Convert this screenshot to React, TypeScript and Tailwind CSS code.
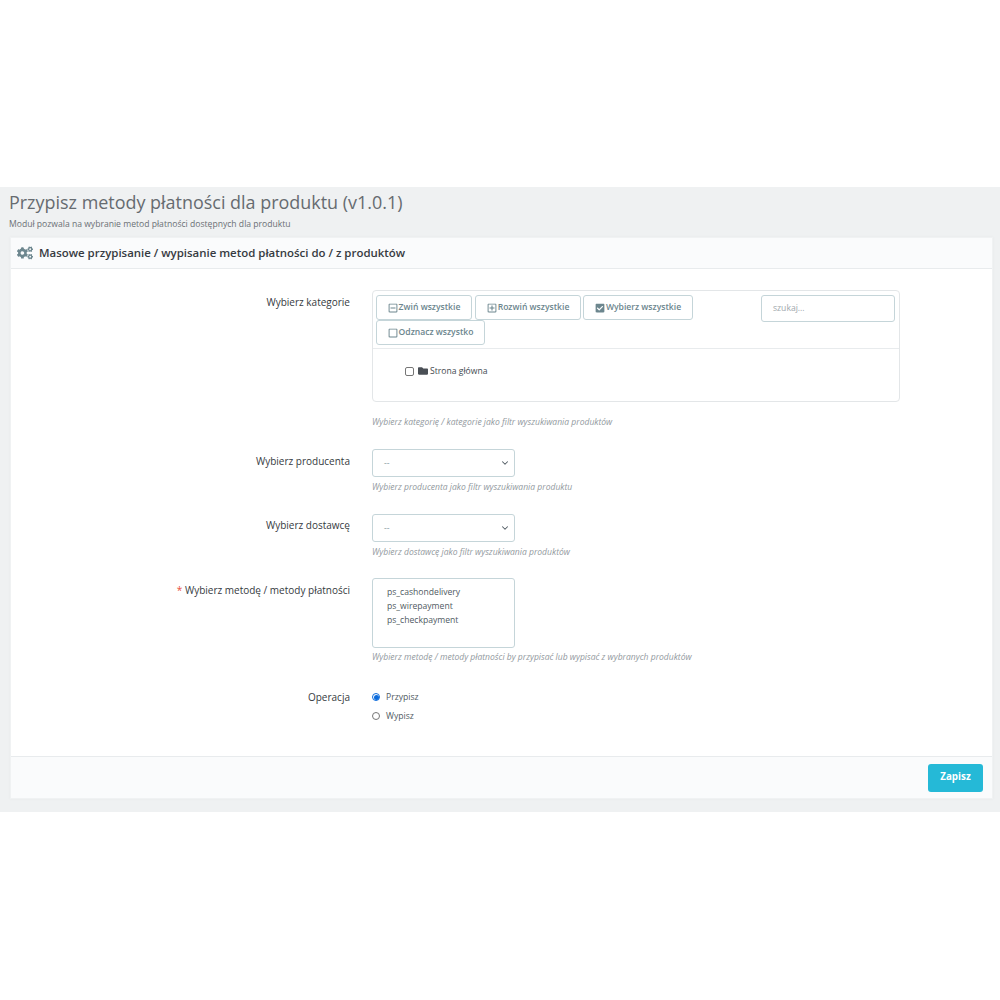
import React from "react";
import { FaCogs, FaFolder, FaCheckSquare, FaRegMinusSquare, FaRegPlusSquare, FaRegSquare } from "react-icons/fa";
import { ChevronDown } from "lucide-react";

const font = "font-['Open_Sans',sans-serif]";

function TreeButton({ icon, label, className }: { icon: React.ReactNode; label: string; className: string }) {
  return (
    <button className={`flex h-[25px] items-center justify-center gap-[1px] rounded-[3px] border border-[#c5d5d9] bg-white text-[8.6px] font-semibold text-[#6c868e] ${className}`}>
      {icon}
      {label}
    </button>
  );
}

function Row({ label, required, top, children, className }: { label: string; required?: boolean; top: string; children: React.ReactNode; className: string }) {
  return (
    <div className={`flex ${className}`}>
      <div className={`w-[339px] shrink-0 text-right text-[10px] leading-[14px] text-[#363a41] ${top}`}>
        {required && <span className="text-[#e84e3c]">* </span>}
        {label}
      </div>
      <div className="ml-[22px] min-w-0 flex-1">{children}</div>
    </div>
  );
}

function Help({ children }: { children: React.ReactNode }) {
  return <p className="text-[8.55px] italic leading-[12px] text-[#92999e]">{children}</p>;
}

function FakeSelect() {
  return (
    <div className="flex h-[28px] w-[143px] items-center justify-between rounded-[3px] border border-[#c5d5d9] bg-white pl-[11px] pr-[4px] text-[8.6px] text-[#8a9ca2]">
      <span>--</span>
      <ChevronDown className="h-[10px] w-[10px] text-[#4f5a62]" strokeWidth={2.5} />
    </div>
  );
}

export default function App() {
  return (
    <div className={`h-[1000px] w-[1000px] bg-white ${font}`}>
      <div className="h-[187px]" />
      <div className="h-[625px] bg-[#eff1f2] pl-[10px] pr-[7px]">
        <h1 className="ml-[-1px] pt-[3px] text-[17.95px] leading-[24px] text-[#666b70]">
          Przypisz metody płatności dla produktu (v1.0.1)
        </h1>
        <p className="ml-[-1px] mt-[4px] text-[8.6px] leading-[12px] text-[#6b7075]">
          Moduł pozwala na wybranie metod płatności dostępnych dla produktu
        </p>
        <div className="mt-[7px] h-[562px] border border-[#f0f2f3] bg-white shadow-[0_0_3px_rgba(0,0,0,0.04)]">
          <div className="flex h-[31px] items-center gap-[6px] border-b border-[#e8ebed] bg-[#fafbfc] pl-[6px] text-[#363a41]">
            <FaCogs className="h-[16px] w-[16px] text-[#6c868e]" />
            <span className="text-[11.45px] font-semibold">Masowe przypisanie / wypisanie metod płatności do / z produktów</span>
          </div>
          <div className="h-[487px] pt-[21px]">
            <Row label="Wybierz kategorie" top="pt-[5px]" className="">
              <div className="h-[112px] w-[528px] rounded-[4px] border border-[#e3e6e8] bg-white">
                <div className="flex h-[58px] justify-between border-b border-[#e8ebed] pl-[3px] pr-[4px] pt-[4px]">
                  <div className="flex w-[340px] flex-wrap content-start">
                    <TreeButton className="w-[96px]" label="Zwiń wszystkie" icon={<FaRegMinusSquare className="h-[10px] w-[10px]" />} />
                    <TreeButton className="ml-[3px] w-[106px]" label="Rozwiń wszystkie" icon={<FaRegPlusSquare className="h-[10px] w-[10px]" />} />
                    <TreeButton className="ml-[2px] w-[110px]" label="Wybierz wszystkie" icon={<FaCheckSquare className="h-[10px] w-[10px]" />} />
                    <TreeButton className="w-[109px]" label="Odznacz wszystko" icon={<FaRegSquare className="h-[10px] w-[10px]" />} />
                  </div>
                  <div className="flex h-[27px] w-[134px] items-center rounded-[3px] border border-[#c5d5d9] bg-white pl-[11px] text-[8.6px] text-[#a0a8ad]">
                    szukaj...
                  </div>
                </div>
                <div className="flex items-center pl-[32px] pt-[16px] text-[8.6px] text-[#444a50]">
                  <span className="h-[9px] w-[9px] rounded-[2px] border border-[#767676] bg-white" />
                  <FaFolder className="ml-[4px] h-[10px] w-[10px] text-[#4a4f55]" />
                  <span className="ml-[2px]">Strona główna</span>
                </div>
              </div>
              <div className="mt-[14px]">
                <Help>Wybierz kategorię / kategorie jako filtr wyszukiwania produktów</Help>
              </div>
            </Row>

            <Row label="Wybierz producenta" top="pt-[5px]" className="mt-[21px]">
              <FakeSelect />
              <div className="mt-[4px]">
                <Help>Wybierz producenta jako filtr wyszukiwania produktu</Help>
              </div>
            </Row>

            <Row label="Wybierz dostawcę" top="pt-[4px]" className="mt-[21px]">
              <FakeSelect />
              <div className="mt-[4px]">
                <Help>Wybierz dostawcę jako filtr wyszukiwania produktów</Help>
              </div>
            </Row>

            <Row label="Wybierz metodę / metody płatności" required top="pt-[5px]" className="mt-[20px]">
              <div className="h-[70px] w-[143px] rounded-[3px] border border-[#c5d5d9] bg-white pl-[14px] pt-[6px] text-[8.6px] leading-[14px] text-[#4f5a62]">
                <div>ps_cashondelivery</div>
                <div>ps_wirepayment</div>
                <div>ps_checkpayment</div>
              </div>
              <div className="mt-[3px]">
                <Help>Wybierz metodę / metody płatności by przypisać lub wypisać z wybranych produktów</Help>
              </div>
            </Row>

            <Row label="Operacja" top="pt-[0px]" className="mt-[27px]">
              <div className="flex h-[14px] items-center text-[8.6px] text-[#4f5a62]">
                <span className="flex h-[8px] w-[8px] items-center justify-center rounded-full border border-[#0b6bdc] bg-white">
                  <span className="h-[5px] w-[5px] rounded-full bg-[#0b6bdc]" />
                </span>
                <span className="ml-[6px]">Przypisz</span>
              </div>
              <div className="mt-[5px] flex h-[14px] items-center text-[8.6px] text-[#4f5a62]">
                <span className="h-[8px] w-[8px] rounded-full border border-[#767676] bg-white" />
                <span className="ml-[6px]">Wypisz</span>
              </div>
            </Row>
          </div>
          <div className="flex h-[42px] items-center justify-end border-t border-[#e8ebed] bg-[#fafbfc] pr-[9px]">
            <button className="h-[28px] w-[55px] rounded-[3px] bg-[#25b9d7] text-[9.8px] font-bold text-white">Zapisz</button>
          </div>
        </div>
      </div>
    </div>
  );
}
